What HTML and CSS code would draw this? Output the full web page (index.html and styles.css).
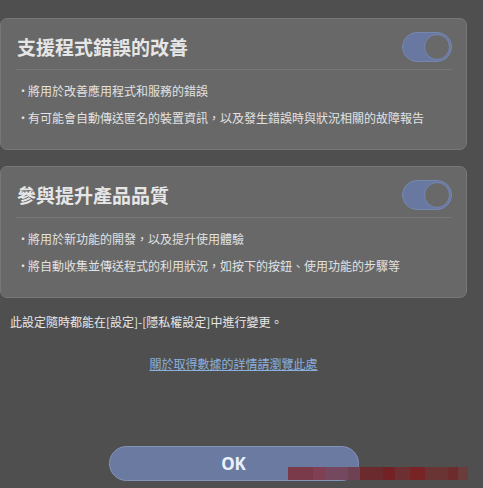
FILE: index.html
```html
<!DOCTYPE html>
<html lang="zh-Hant">
<head>
<meta charset="utf-8">
<link rel="stylesheet" href="styles.css">
</head>
<body>
<div class="page">
  <div class="column">
    <section class="card">
      <div class="card-head">
        <h2 class="title">支援程式錯誤的改善</h2>
        <span class="toggle"><span class="knob"></span></span>
      </div>
      <div class="divider"></div>
      <ul class="list">
        <li><span class="dot">·</span>將用於改善應用程式和服務的錯誤</li>
        <li><span class="dot">·</span>有可能會自動傳送匿名的裝置資訊，以及發生錯誤時與狀況相關的故障報告</li>
      </ul>
    </section>
    <section class="card">
      <div class="card-head">
        <h2 class="title">參與提升產品品質</h2>
        <span class="toggle"><span class="knob"></span></span>
      </div>
      <div class="divider"></div>
      <ul class="list">
        <li><span class="dot">·</span>將用於新功能的開發，以及提升使用體驗</li>
        <li><span class="dot">·</span>將自動收集並傳送程式的利用狀況，如按下的按鈕、使用功能的步驟等</li>
      </ul>
    </section>
    <p class="note">此設定隨時都能在[設定]-[隱私權設定]中進行變更。</p>
    <a class="link" href="#">關於取得數據的詳情請瀏覽此處</a>
    <button class="ok">OK</button>
  </div>
  <div class="blur">
    <span class="b1"></span><span class="b2"></span><span class="b3"></span><span class="b4"></span><span class="b5"></span><span class="b6"></span><span class="b7"></span><span class="b8"></span><span class="b9"></span><span class="b10"></span><span class="b11"></span>
  </div>
</div>
</body>
</html>
```
FILE: styles.css
```css
html, body {
  margin: 0;
  padding: 0;
  background: #4f4f4f;
}
body {
  font-family: "Noto Sans CJK TC", "Noto Sans", sans-serif;
  color: #e4e4e4;
}
.page {
  position: relative;
  width: 483px;
  height: 488px;
  overflow: hidden;
}
.column {
  width: 467px;
  padding-top: 18px;
  display: flex;
  flex-direction: column;
}
.card {
  background: #686868;
  border: 1px solid #777777;
  border-radius: 7px;
  padding: 13px 14px 18px 14px;
  margin-bottom: 16px;
}
.card:nth-of-type(2) {
  margin-bottom: 0;
}
.card-head {
  display: flex;
  align-items: center;
  justify-content: space-between;
  height: 30px;
}
.title {
  margin: 0 0 0 2px;
  font-size: 19px;
  font-weight: 700;
  line-height: 28px;
  color: #e6e6e6;
}
.toggle {
  box-sizing: border-box;
  width: 50px;
  height: 30px;
  border-radius: 15px;
  background: #6878a0;
  border: 1px solid #7788b0;
  display: flex;
  justify-content: flex-end;
  align-items: center;
  padding-right: 1px;
}
.knob {
  box-sizing: border-box;
  width: 26px;
  height: 26px;
  border-radius: 50%;
  background: #696969;
  border: 1px solid #7486b4;
}
.divider {
  height: 1px;
  background: #767676;
  margin-top: 7px;
}
.list {
  list-style: none;
  margin: 0;
  padding: 7px 0 0 2px;
}
.list li {
  font-size: 12px;
  line-height: 27px;
  color: #e2e2e2;
  white-space: nowrap;
}
.dot {
  display: inline-block;
  width: 11px;
  text-align: center;
}
.note {
  margin: 15px 0 0 10px;
  font-size: 12px;
  line-height: 17px;
  color: #e8e8e8;
}
.link {
  align-self: center;
  margin-top: 25px;
  font-size: 12px;
  line-height: 17px;
  color: #8cb0dc;
  text-decoration: underline;
}
.ok {
  align-self: center;
  margin-top: 74px;
  width: 250px;
  height: 35px;
  border-radius: 18px;
  background: #6a7aa0;
  border: 1px solid #8494b8;
  color: #eaf2fc;
  font-family: "Noto Sans", "Liberation Sans", sans-serif;
  font-weight: 700;
  font-size: 17px;
  padding: 0;
}
.blur {
  position: absolute;
  left: 288px;
  top: 467px;
  height: 13px;
  display: flex;
}
.blur span { display: block; height: 13px; }
.b1 { width: 25px; background: #7a3a4a; }
.b2 { width: 12px; background: #7e4052; }
.b3 { width: 23px; background: #74485e; }
.b4 { width: 12px; background: #6e4252; }
.b5 { width: 23px; background: #6a2a2e; }
.b6 { width: 12px; background: #722224; }
.b7 { width: 15px; background: #6c3032; }
.b8 { width: 15px; background: #782426; }
.b9 { width: 23px; background: #6a3434; }
.b10 { width: 10px; background: #6c2c2c; }
.b11 { width: 10px; background: #6a3c3c; }
```
